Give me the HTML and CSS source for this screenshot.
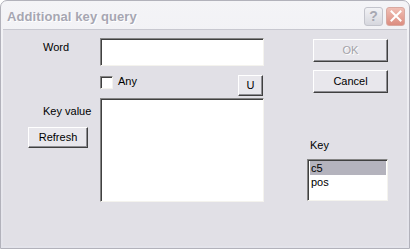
FILE: index.html
```html
<!DOCTYPE html>
<html>
<head>
<meta charset="utf-8">
<link rel="stylesheet" href="styles.css">
</head>
<body>
<div class="window">
  <div class="titlebar">
    <span class="title">Additional key query</span>
    <div class="tb-buttons">
      <div class="tb-btn help">?</div>
      <div class="tb-btn close">
        <svg width="12" height="12" viewBox="0 0 12 12"><path d="M1.5 1.5 L10.5 10.5 M10.5 1.5 L1.5 10.5" stroke="#fff" stroke-width="2" stroke-linecap="square"/></svg>
      </div>
    </div>
  </div>
  <div class="client">
    <div class="col-left">
      <div class="label word-label">Word</div>
      <div class="label keyvalue-label">Key value</div>
      <div class="btn refresh">Refresh</div>
    </div>
    <div class="col-mid">
      <div class="edit word-edit"></div>
      <div class="any-row">
        <div class="check"></div>
        <span class="label any-label">Any</span>
        <div class="btn u-btn">U</div>
      </div>
      <div class="edit keyvalue-list"></div>
    </div>
    <div class="col-right">
      <div class="btn ok disabled">OK</div>
      <div class="btn cancel">Cancel</div>
      <div class="label key-label">Key</div>
      <div class="edit key-list">
        <div class="item selected">c5</div>
        <div class="item">pos</div>
      </div>
    </div>
  </div>
</div>
</body>
</html>
```

FILE: styles.css
```css
html, body {
  margin: 0;
  padding: 0;
  background: #ffffff;
}
body {
  width: 410px;
  height: 249px;
  overflow: hidden;
  font-family: "Liberation Sans", Arial, sans-serif;
  font-size: 11px;
  color: #000;
}
.window {
  width: 410px;
  height: 249px;
  box-sizing: border-box;
  background: linear-gradient(#f4f4f7, #e3e3ea);
  border: 1px solid #b2b2bb;
  border-radius: 7px 7px 0 0;
  display: flex;
  flex-direction: column;
  padding: 0 2px 2px 2px;
}
.titlebar {
  height: 28px;
  display: flex;
  align-items: center;
  justify-content: space-between;
  padding-left: 4px;
  padding-right: 2px;
  flex: none;
}
.title {
  font-weight: bold;
  font-size: 13px;
  color: #a6a6b2;
  text-shadow: 1px 1px 0 #ffffff;
  letter-spacing: 0.1px;
  margin-top: 2px;
}
.tb-buttons {
  display: flex;
  gap: 3px;
  margin-top: 2px;
}
.tb-btn {
  width: 19px;
  height: 19px;
  border-radius: 3px;
  box-sizing: border-box;
  display: flex;
  align-items: center;
  justify-content: center;
}
.help {
  border: 1px solid #c3c4cc;
  background: linear-gradient(#f2f2f5, #d6d7de);
  color: #a7a8b2;
  font-weight: bold;
  font-size: 14px;
}
.close {
  border: 1px solid #d8a8a0;
  background: linear-gradient(#f0bfb5, #dc8d80);
}
.client {
  flex: 1;
  background: #e1e0e6;
  border-top: 1px solid #c8c8d0;
  display: flex;
}
.col-left {
  width: 97px;
  display: flex;
  flex-direction: column;
  flex: none;
}
.label {
  line-height: 13px;
  white-space: nowrap;
}
.word-label {
  margin: 11px 0 0 40px;
}
.keyvalue-label {
  margin: 51px 0 0 40px;
}
.btn {
  box-sizing: border-box;
  background: #e8e7ec;
  border-top: 1px solid #ffffff;
  border-left: 1px solid #ffffff;
  border-right: 1px solid #404040;
  border-bottom: 1px solid #404040;
  box-shadow: inset -1px -1px 0 #8e8e93;
  display: flex;
  align-items: center;
  justify-content: center;
  line-height: 13px;
}
.refresh {
  width: 60px;
  height: 21px;
  margin: 9px 0 0 25px;
}
.col-mid {
  width: 164px;
  flex: none;
  display: flex;
  flex-direction: column;
}
.edit {
  box-sizing: border-box;
  background: #ffffff;
  border-top: 1px solid #848484;
  border-left: 1px solid #848484;
  border-right: 1px solid #f4f3ee;
  border-bottom: 1px solid #f4f3ee;
  box-shadow: inset 1px 1px 0 #404040;
}
.word-edit {
  height: 28px;
  margin-top: 8px;
}
.any-row {
  display: flex;
  align-items: flex-start;
  height: 22px;
  margin-top: 9px;
}
.check {
  width: 13px;
  height: 13px;
  box-sizing: border-box;
  background: #ffffff;
  border-top: 1px solid #848484;
  border-left: 1px solid #848484;
  border-right: 1px solid #f4f3ee;
  border-bottom: 1px solid #f4f3ee;
  box-shadow: inset 1px 1px 0 #404040;
  margin-top: 1px;
}
.any-label {
  margin-left: 5px;
}
.u-btn {
  width: 25px;
  height: 21px;
  margin-left: auto;
  margin-right: 1px;
  margin-top: 0;
}
.keyvalue-list {
  height: 104px;
  margin-top: 1px;
}
.col-right {
  margin-left: 43px;
  width: 81px;
  flex: none;
  display: flex;
  flex-direction: column;
}
.ok {
  width: 75px;
  height: 23px;
  margin: 9px 0 0 6px;
  color: #a3a2a8;
  text-shadow: 1px 1px 0 #ffffff;
}
.cancel {
  width: 75px;
  height: 23px;
  margin: 8px 0 0 6px;
}
.key-label {
  margin: 46px 0 0 3px;
}
.key-list {
  height: 42px;
  margin-top: 7px;
  width: 81px;
  padding: 1px 1px 0 2px;
}
.item {
  height: 14px;
  line-height: 14px;
  padding-left: 1px;
}
.item.selected {
  background: #b4b3bd;
}
```
